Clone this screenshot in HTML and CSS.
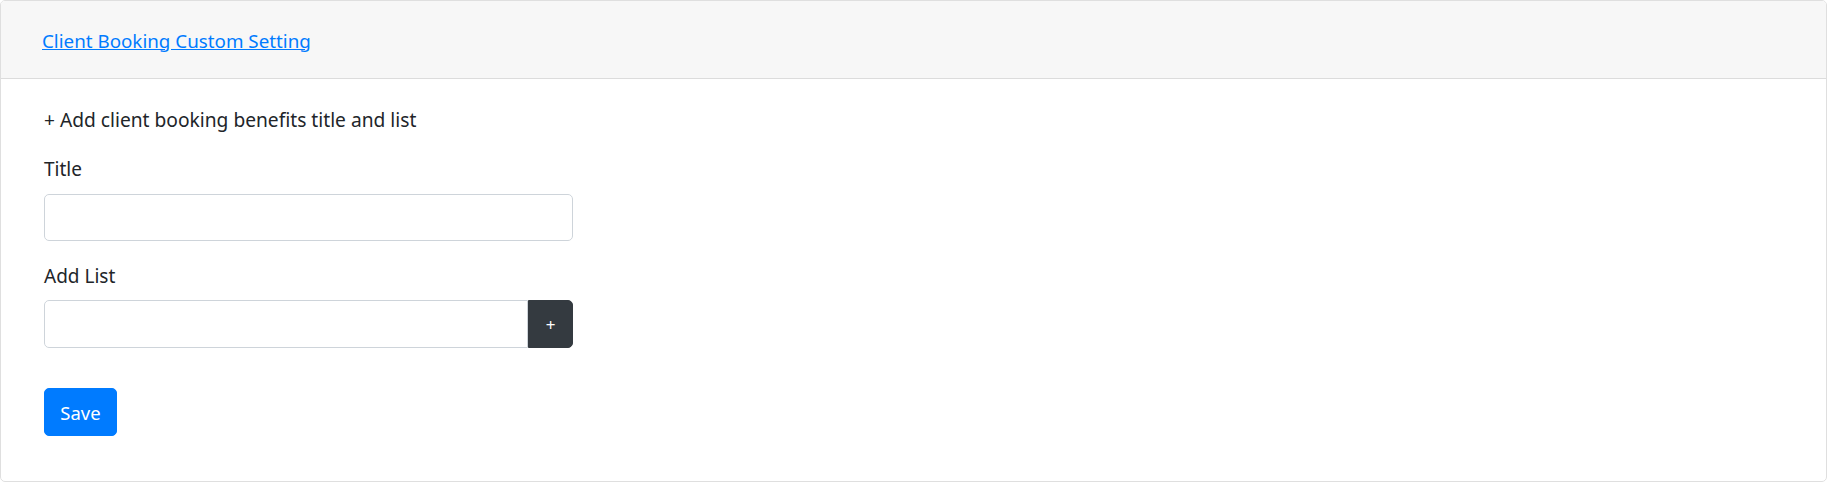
FILE: index.html
```html
<!DOCTYPE html>
<html>
<head>
<meta charset="utf-8">
<link rel="stylesheet" href="styles.css">
</head>
<body>
<div class="card">
  <div class="card-header">
    <a href="#" class="header-link">Client Booking Custom Setting</a>
  </div>
  <div class="card-body">
    <div class="intro">+ Add client booking benefits title and list</div>
    <label class="label">Title</label>
    <input class="field" type="text">
    <label class="label label-list">Add List</label>
    <div class="input-group">
      <input class="field field-grow" type="text">
      <button class="btn-add" type="button">+</button>
    </div>
    <button class="btn-save" type="button">Save</button>
  </div>
</div>
</body>
</html>
```

FILE: styles.css
```css
html, body {
  margin: 0;
  padding: 0;
  background: #fff;
}
body {
  font-family: "Noto Sans", "Open Sans", sans-serif;
  color: #212529;
}
.card {
  box-sizing: border-box;
  width: 1827px;
  height: 482px;
  border: 1px solid #dfdfdf;
  border-radius: 5px;
  overflow: hidden;
  display: flex;
  flex-direction: column;
}
.card-header {
  height: 77px;
  background: #f7f7f7;
  border-bottom: 1px solid #dcdcdc;
  padding-left: 41px;
  display: flex;
  align-items: center;
}
.header-link {
  font-size: 18.8px;
  line-height: 28px;
  color: #007bff;
  text-decoration: underline;
  margin-top: 2px;
}
.card-body {
  padding: 27px 0 0 43px;
  display: flex;
  flex-direction: column;
  align-items: flex-start;
}
.intro {
  font-size: 19.2px;
  line-height: 28px;
  color: #212529;
}
.label {
  font-size: 19px;
  line-height: 28px;
  margin-top: 21px;
  margin-bottom: 11px;
}
.label-list {
  margin-top: 21px;
  margin-bottom: 10px;
}
.field {
  box-sizing: border-box;
  width: 529px;
  height: 47px;
  border: 1px solid #ced4da;
  border-radius: 5px;
  background: #fff;
  padding: 0 14px;
  font-family: inherit;
  font-size: 18px;
  outline: none;
}
.input-group {
  display: flex;
  width: 529px;
  height: 48px;
}
.field-grow {
  flex: 1;
  width: auto;
  height: 48px;
  border-top-right-radius: 0;
  border-bottom-right-radius: 0;
}
.btn-add {
  width: 45px;
  height: 48px;
  border: 1px solid #343a40;
  background: #343a40;
  color: #fff;
  border-radius: 0 5px 5px 0;
  font-family: inherit;
  font-size: 17px;
  padding: 0;
}
.btn-save {
  margin-top: 40px;
  width: 73px;
  height: 48px;
  border: 1px solid #007bff;
  background: #007bff;
  color: #fff;
  border-radius: 5px;
  font-family: inherit;
  font-size: 18.5px;
  padding: 0;
}
```
